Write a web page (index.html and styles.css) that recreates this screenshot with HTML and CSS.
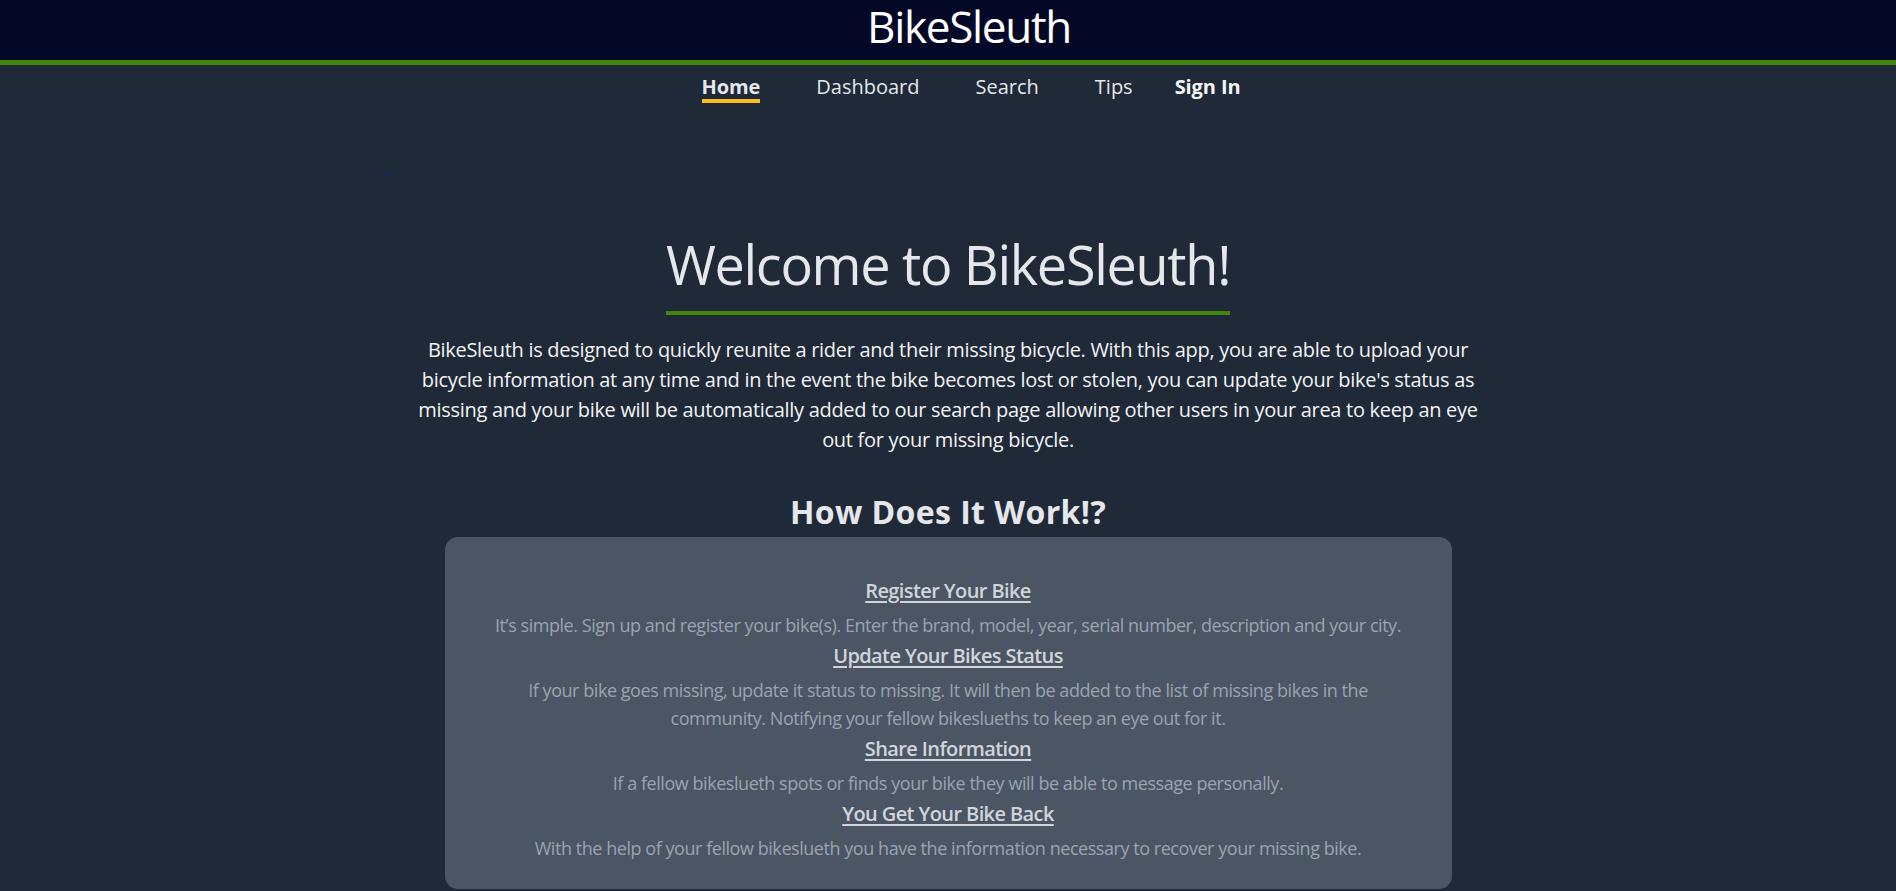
FILE: index.html
```html
<!DOCTYPE html>
<html lang="en">
<head>
<meta charset="utf-8">
<title>BikeSleuth</title>
<link rel="stylesheet" href="styles.css">
</head>
<body>
<header class="topbar">
  <h1 class="brand">BikeSleuth</h1>
</header>
<nav class="mainnav">
  <a class="navlink active" href="#">Home</a>
  <a class="navlink" href="#">Dashboard</a>
  <a class="navlink" href="#">Search</a>
  <a class="navlink" href="#">Tips</a>
  <a class="navlink signin" href="#">Sign In</a>
</nav>
<span class="stray-dot"></span>
<main class="home">
  <section class="intro">
    <h2 class="welcome">Welcome to BikeSleuth!</h2>
    <p class="lead">BikeSleuth is designed to quickly reunite a rider and their missing bicycle. With this app, you are able to upload your bicycle information at any time and in the event the bike becomes lost or stolen, you can update your bike's status as missing and your bike will be automatically added to our search page allowing other users in your area to keep an eye out for your missing bicycle.</p>
  </section>
  <section class="how">
    <h3 class="how-title">How Does It Work!?</h3>
    <div class="card">
      <div class="step">
        <h4 class="step-title">Register Your Bike</h4>
        <p class="step-desc">It’s simple. Sign up and register your bike(s). Enter the brand, model, year, serial number, description and your city.</p>
      </div>
      <div class="step">
        <h4 class="step-title">Update Your Bikes Status</h4>
        <p class="step-desc">If your bike goes missing, update it status to missing. It will then be added to the list of missing bikes in the community. Notifying your fellow bikeslueths to keep an eye out for it.</p>
      </div>
      <div class="step">
        <h4 class="step-title">Share Information</h4>
        <p class="step-desc">If a fellow bikeslueth spots or finds your bike they will be able to message personally.</p>
      </div>
      <div class="step">
        <h4 class="step-title">You Get Your Bike Back</h4>
        <p class="step-desc">With the help of your fellow bikeslueth you have the information necessary to recover your missing bike.</p>
      </div>
    </div>
  </section>
</main>
</body>
</html>
```
FILE: styles.css
```css
html, body {
  margin: 0;
  padding: 0;
}
body {
  background: #1f2937;
  font-family: "Open Sans", "Noto Sans", sans-serif;
  color: #e5e7eb;
  position: relative;
  min-height: 891px;
  overflow: hidden;
}

.topbar {
  height: 60px;
  background: #030826;
  border-bottom: 5px solid #41860b;
  display: flex;
  justify-content: center;
  align-items: flex-start;
  padding-left: 42px;
}
.brand {
  margin: 0;
  font-size: 44px;
  font-weight: 400;
  line-height: 52px;
  letter-spacing: -1.3px;
  color: #ffffff;
}

.mainnav {
  display: flex;
  justify-content: center;
  align-items: flex-start;
  gap: 56px;
  padding-top: 10px;
  padding-left: 46px;
  height: 28px;
}
.navlink {
  display: inline-block;
  font-size: 20px;
  line-height: 24px;
  color: #e5e7eb;
  text-decoration: none;
  letter-spacing: 0;
  border-bottom: 4px solid transparent;
}
.navlink.active {
  font-weight: 700;
  letter-spacing: -0.1px;
  border-bottom-color: #fbbf24;
}
.navlink.signin {
  font-weight: 700;
  margin-left: -14px;
  letter-spacing: -0.1px;
  color: #f3f4f6;
}

.stray-dot {
  position: absolute;
  left: 387px;
  top: 173px;
  width: 2px;
  height: 2px;
  background: #1010e8;
}

.home {
  padding-top: 129px;
  display: flex;
  flex-direction: column;
  align-items: center;
}
.intro {
  display: flex;
  flex-direction: column;
  align-items: center;
  width: 1066px;
}
.welcome {
  margin: 0;
  font-size: 54px;
  font-weight: 400;
  line-height: 65px;
  letter-spacing: -1.3px;
  color: #e5e7eb;
  padding-bottom: 14px;
  border-bottom: 4px solid #41860b;
}
.lead {
  margin: 20px 0 0;
  font-size: 20px;
  line-height: 30px;
  letter-spacing: -0.3px;
  text-align: center;
  color: #f3f4f6;
}

.how {
  display: flex;
  flex-direction: column;
  align-items: center;
  margin-top: 38px;
}
.how-title {
  margin: 0;
  font-size: 32px;
  font-weight: 700;
  line-height: 38px;
  letter-spacing: 0.4px;
  color: #e5e7eb;
}
.card {
  margin-top: 6px;
  width: 1007px;
  box-sizing: border-box;
  background: #4b5563;
  border-radius: 13px;
  padding: 40px 20px 24px;
  text-align: center;
}
.step-title {
  margin: 0 0 6px;
  font-size: 20px;
  font-weight: 600;
  line-height: 28px;
  letter-spacing: -0.6px;
  color: #d1d5db;
  text-decoration: underline;
  text-decoration-thickness: 2px;
  text-underline-offset: 3px;
}
.step-desc {
  margin: 0 0 3px;
  font-size: 18px;
  line-height: 28px;
  letter-spacing: -0.45px;
  color: #9ca3af;
  padding: 0 21px;
}
```
